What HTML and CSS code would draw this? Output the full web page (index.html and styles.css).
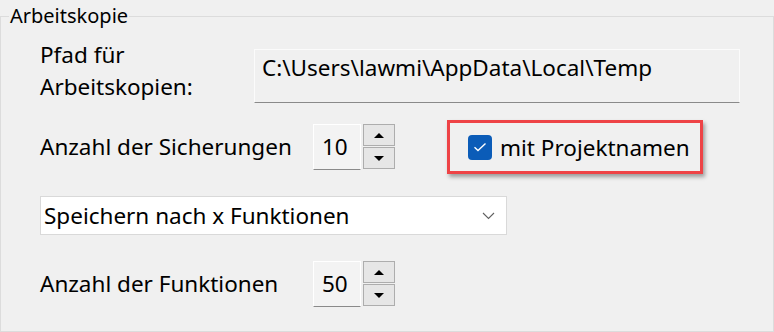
FILE: index.html
```html
<!DOCTYPE html>
<html lang="de">
<head>
<meta charset="UTF-8">
<meta name="viewport" content="width=device-width, initial-scale=1.0">
<title>Arbeitskopie</title>
<link rel="stylesheet" href="styles.css">
</head>
<body>

<fieldset class="group">
  <legend>Arbeitskopie</legend>

  <div class="row row-path">
    <div class="label label-path">Pfad für<br>Arbeitskopien:</div>
    <div class="path-box">C:\Users\lawmi\AppData\Local\Temp</div>
  </div>

  <div class="row row-spin row-first">
    <div class="label label-spin">Anzahl der Sicherungen</div>
    <div class="spinner">
      <div class="spin-value">10</div>
      <div class="spin-buttons">
        <div class="spin-btn"><span class="arrow-up"></span></div>
        <div class="spin-btn"><span class="arrow-down"></span></div>
      </div>
    </div>
    <div class="highlight">
      <span class="checkbox">
        <svg width="14" height="10" viewBox="0 0 14 10">
          <path d="M1.5 5.2 L5 8.5 L12.5 1.5" fill="none" stroke="#fff" stroke-width="1.4"/>
        </svg>
      </span>
      <span class="check-label">mit Projektnamen</span>
    </div>
  </div>

  <div class="row row-combo">
    <div class="combo">
      <span>Speichern nach x Funktionen</span>
      <svg class="chevron" width="13" height="8" viewBox="0 0 13 8">
        <path d="M1 1 L6.5 6.5 L12 1" fill="none" stroke="#606060" stroke-width="1.1"/>
      </svg>
    </div>
  </div>

  <div class="row row-spin row-last">
    <div class="label label-spin">Anzahl der Funktionen</div>
    <div class="spinner">
      <div class="spin-value">50</div>
      <div class="spin-buttons">
        <div class="spin-btn"><span class="arrow-up"></span></div>
        <div class="spin-btn"><span class="arrow-down"></span></div>
      </div>
    </div>
  </div>
</fieldset>

</body>
</html>
```

FILE: styles.css
```css
html, body {
  margin: 0;
  background: #f0f0f0;
}

body {
  font-family: "Noto Sans", "Open Sans", sans-serif;
  font-size: 22.5px;
  color: #000;
  height: 332px;
  overflow: hidden;
}

.group {
  margin: 2px 0 0 0;
  padding: 0 33px 0 39px;
  border: 1px solid #dcdcdc;
  width: 774px;
  height: 330px;
  box-sizing: border-box;
}

.group legend {
  margin-left: -31px;
  padding: 0 1px;
  font-size: 20px;
  line-height: 28px;
}

.row {
  display: flex;
  align-items: center;
}

.label {
  line-height: 32px;
}

/* path row */
.row-path {
  margin-top: 9px;
  align-items: flex-start;
}

.label-path {
  width: 214px;
}

.path-box {
  flex: 1;
  margin-top: 10px;
  height: 54px;
  box-sizing: border-box;
  border: 1px solid #fbfbfb;
  border-bottom: 1px solid #8a8a8a;
  padding: 4px 0 0 7px;
  line-height: 28px;
}

/* spinner rows */
.row-first {
  margin-top: 17px;
}

.row-last {
  margin-top: 26px;
}

.label-spin {
  width: 273px;
}

.spinner {
  display: flex;
  gap: 2px;
}

.spin-value {
  width: 48px;
  height: 46px;
  box-sizing: border-box;
  border: 1px solid #fff;
  border-bottom: 1px solid #8a8a8a;
  background: #f3f3f3;
  padding-left: 8px;
  line-height: 44px;
}

.spin-buttons {
  display: flex;
  flex-direction: column;
  gap: 1px;
}

.spin-btn {
  width: 32px;
  height: 22px;
  box-sizing: border-box;
  border: 1px solid #adadad;
  background: #e6e6e6;
  display: flex;
  justify-content: center;
  align-items: center;
}

.arrow-up {
  border-left: 5px solid transparent;
  border-right: 5px solid transparent;
  border-bottom: 5px solid #000;
}

.arrow-down {
  border-left: 5px solid transparent;
  border-right: 5px solid transparent;
  border-top: 5px solid #000;
}

/* checkbox with red highlight */
.highlight {
  margin-left: 52px;
  width: 256px;
  height: 54px;
  box-sizing: border-box;
  border: 3px solid #ee4346;
  box-shadow: 2px 3px 4px rgba(0, 0, 0, 0.35);
  display: flex;
  align-items: center;
  padding-left: 18px;
}

.checkbox {
  width: 24px;
  height: 25px;
  border-radius: 4px;
  background: #0b5cb8;
  display: flex;
  justify-content: center;
  align-items: center;
}

.check-label {
  margin-left: 8px;
}

/* combo box */
.row-combo {
  margin-top: 22px;
}

.combo {
  width: 467px;
  height: 39px;
  box-sizing: border-box;
  background: #fff;
  border: 1px solid #d9d9d9;
  display: flex;
  align-items: center;
  justify-content: space-between;
  padding: 0 11px 0 3px;
}
```
